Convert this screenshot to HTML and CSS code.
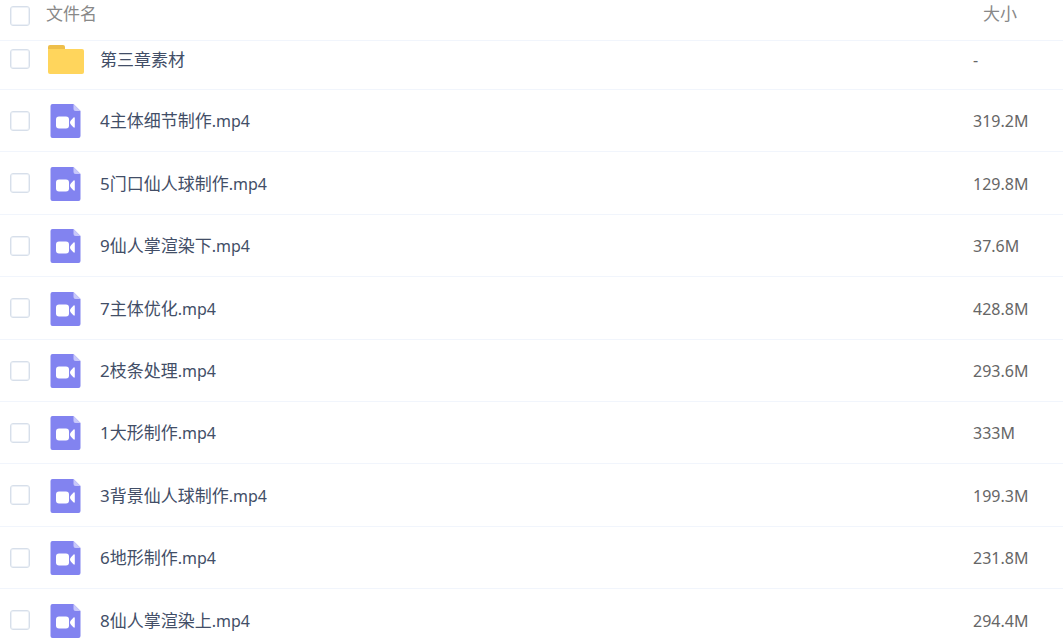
FILE: index.html
```html
<!DOCTYPE html>
<html lang="zh-CN">
<head>
    <meta charset="utf-8">
    <title>文件列表</title>
    <link rel="stylesheet" href="styles.css">
</head>
<body>

<!-- shared icons -->
<svg class="sprite" aria-hidden="true">
    <symbol id="icon-folder" viewBox="0 0 36 34">
        <path d="M0 12V4a2 2 0 0 1 2-2h13a2 2 0 0 1 2 2v8z" fill="#eebf4b"/>
        <path d="M0 6h34a2 2 0 0 1 2 2v21a2 2 0 0 1-2 2H2a2 2 0 0 1-2-2z" fill="#ffd55c"/>
    </symbol>
    <symbol id="icon-video" viewBox="0 0 36 34">
        <path d="M4 0h21.500l7 7v25a2 2 0 0 1-2 2H4.500a2 2 0 0 1-2-2V2a2 2 0 0 1 2-2z" fill="#8283f0"/>
        <path d="M25.500 0l7 7h-5a2 2 0 0 1-2-2z" fill="#c8c8fa"/>
        <rect x="8" y="12.500" width="13" height="12" rx="3" fill="#fff"/>
        <path d="M22 18.500c0-1 .4-1.700 1.200-2.500l2.200-2.300c.7-.7 1.400-.5 1.400.5v8.600c0 1-.7 1.200-1.400.5L23.200 21c-.8-.8-1.200-1.500-1.200-2.500z" fill="#fff"/>
    </symbol>
</svg>

<div class="file-list">
    <table>
        <thead>
            <tr>
                <th class="check"><input type="checkbox" id="checkAll" aria-label="全选"></th>
                <th>文件名</th>
                <th class="size">大小</th>
            </tr>
        </thead>
        <tbody id="fileTable">
        </tbody>
    </table>
</div>

<script>
    const files = [
        { name: '第三章素材', ext: '', size: '-' },
        { name: '4主体细节制作', ext: '.mp4', size: '319.2M' },
        { name: '5门口仙人球制作', ext: '.mp4', size: '129.8M' },
        { name: '9仙人掌渲染下', ext: '.mp4', size: '37.6M' },
        { name: '7主体优化', ext: '.mp4', size: '428.8M' },
        { name: '2枝条处理', ext: '.mp4', size: '293.6M' },
        { name: '1大形制作', ext: '.mp4', size: '333M' },
        { name: '3背景仙人球制作', ext: '.mp4', size: '199.3M' },
        { name: '6地形制作', ext: '.mp4', size: '231.8M' },
        { name: '8仙人掌渲染上', ext: '.mp4', size: '294.4M' }
    ];

    const fileTable = document.getElementById('fileTable');
    files.forEach((file, i) => {
        const row = document.createElement('tr');
        const icon = file.ext ? 'video' : 'folder';
        row.innerHTML = `
            <td class="check"><input type="checkbox" aria-labelledby="file${i}"></td>
            <td>
                <div class="file">
                    <svg class="icon"><use href="#icon-${icon}"/></svg>
                    <a href="#" id="file${i}">${file.name}<span class="ext">${file.ext}</span></a>
                </div>
            </td>
            <td class="size">${file.size}</td>
        `;
        fileTable.appendChild(row);
    });

    document.getElementById('checkAll').addEventListener('change', e => {
        fileTable.querySelectorAll('input').forEach(box => {
            box.checked = e.target.checked;
        });
    });
</script>

</body>
</html>
```
FILE: styles.css
```css
body {
    margin: 0;
    background-color: #fff;
    color: #424e67;
    font-family: "Noto Sans", "Noto Sans CJK SC", sans-serif;
    font-size: 17px;
    line-height: 24px;
}
.sprite {
    position: absolute;
    width: 0;
    height: 0;
}
.file-list {
    height: 100vh;
    overflow: hidden;
}
table {
    width: 100%;
    border-collapse: separate;
    border-spacing: 0;
    table-layout: fixed;
}
th, td {
    box-sizing: border-box;
    height: 62px;
    padding: 0;
    border-bottom: 1px solid #f1f5fc;
    text-align: left;
    vertical-align: middle;
}
tr:nth-child(5n+3) td,
tr:nth-child(5n+5) td {
    height: 63px;
}
th {
    height: 41px;
    padding-bottom: 12px;
    color: #888;
    font-weight: normal;
}
th.check {
    padding-bottom: 9px;
}
/* the first row sits tight under the header */
tbody tr:first-child td {
    height: 49px;
    padding-bottom: 12px;
}
.check {
    width: 46px;
    padding-left: 10px;
}
.size {
    width: 90px;
    color: #666;
    font-size: 16px;
}
td.size {
    padding-top: 1px;
}
th.size {
    padding-left: 10px;
    color: #888;
    font-size: 17px;
}
input {
    display: block;
    appearance: none;
    box-sizing: border-box;
    width: 20px;
    height: 20px;
    margin: 0;
    border: 1px solid #d7dfea;
    border-radius: 3px;
    background-color: #fff;
    box-shadow: inset 0 0 0 1px #edf1f7;
    cursor: pointer;
}
input:checked {
    border-color: #8283f0;
    background-color: #8283f0;
}
.file {
    display: flex;
    align-items: center;
    gap: 16px;
    padding: 1px 0 0 2px;
}
.icon {
    flex: none;
    width: 36px;
    height: 34px;
}
a {
    color: inherit;
    text-decoration: none;
}
.ext {
    font-size: 16px;
}
```
